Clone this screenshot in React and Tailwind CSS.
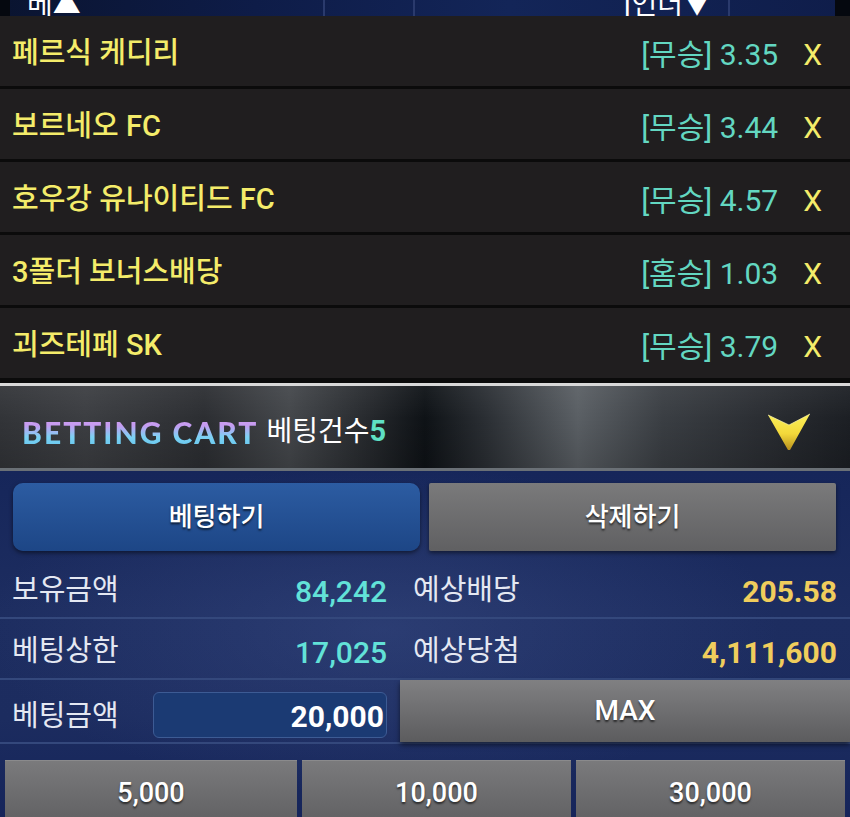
import React from "react";

const rows = [
  { name: "페르식 케디리", pick: "[무승]", odd: "3.35" },
  { name: "보르네오 FC", pick: "[무승]", odd: "3.44" },
  { name: "호우강 유나이티드 FC", pick: "[무승]", odd: "4.57" },
  { name: "3폴더 보너스배당", pick: "[홈승]", odd: "1.03" },
  { name: "괴즈테페 SK", pick: "[무승]", odd: "3.79" },
];

function Arrow() {
  return (
    <svg width="46" height="40" viewBox="0 0 46 40">
      <defs>
        <linearGradient id="ag" x1="0" y1="0" x2="0" y2="1">
          <stop offset="0" stopColor="#fbf05a" />
          <stop offset="0.55" stopColor="#f3d83a" />
          <stop offset="1" stopColor="#b8901e" />
        </linearGradient>
      </defs>
      <path d="M2 3 L23 13 L44 2 L24 38 L22 38 Z" fill="url(#ag)" />
      <path d="M2 3 L23 13 L44 2" fill="none" stroke="#fff8b0" strokeWidth="1" opacity="0.7" />
    </svg>
  );
}

export default function App() {
  return (
    <div className="w-[850px] h-[817px] overflow-hidden bg-[#1b2b5e] font-['Roboto','Noto_Sans_CJK_KR',sans-serif]">
      {/* top clipped header strip */}
      <div className="flex h-[16px] overflow-hidden bg-[linear-gradient(90deg,#0a1430_0%,#0e1c48_30%,#132558_60%,#0f1d4a_100%)] text-white text-[28px] leading-[28px]">
        <div className="w-[10px] bg-[#05080f]" />
        <div className="w-[315px] border-r-[2px] border-[#2a3a6c] pl-[17px]">
          <div className="mt-[-9px]">베▲</div>
        </div>
        <div className="w-[90px] border-r-[2px] border-[#2a3a6c]" />
        <div className="w-[315px] border-r-[2px] border-[#2a3a6c] pl-[209px]">
          <div className="mt-[-9px]">[언더▼</div>
        </div>
        <div className="w-[105px]" />
        <div className="flex-1 bg-[#05080f]" />
      </div>

      {/* picks list */}
      {rows.map((r, i) => (
        <div
          key={i}
          className="flex h-[73px] items-center border-b-[3px] border-[#0b0b0b] bg-[#201e1f] pl-[12px] pr-[28px] pt-[6px]"
        >
          <span className="text-[29px] font-medium text-[#f4ec6a]">{r.name}</span>
          <span className="ml-auto text-[30px] text-[#63d7c1]">
            {r.pick} {r.odd}
          </span>
          <span className="ml-[25px] text-[30px] text-[#f4ec6a]">X</span>
        </div>
      ))}

      {/* lines */}
      <div className="h-[2px] bg-[#0b0b0b]" />
      <div className="h-[3px] bg-[#d8d8d8]" />

      {/* betting cart header */}
      <div className="flex h-[85px] items-center border-b-[3px] border-[#6a7076] bg-[linear-gradient(180deg,rgba(255,255,255,0.05)_0%,rgba(0,0,0,0)_40%,rgba(0,0,0,0.15)_100%),linear-gradient(90deg,#323438_0%,#3c3e42_10%,#2c2e32_24%,#44474b_34%,#24272b_44%,#0e1216_50%,#2a2e33_57%,#5a5f64_68%,#3a3e43_78%,#2a2d32_90%,#1c1f24_100%)] pl-[22px] pr-[38px] pt-[10px]">
        <span className="bg-[linear-gradient(180deg,#e09cf2_0%,#c49cf0_35%,#7cd2f4_60%,#56bce8_100%)] bg-clip-text text-transparent font-['Lato','Liberation_Sans',sans-serif] font-black text-[30px] tracking-[2px]">
          BETTING CART
        </span>
        <span className="ml-[8px] text-white text-[28px]">베팅건수</span>
        <span className="text-[#5fe0c4] text-[29px] font-bold">5</span>
        <div className="ml-auto">
          <Arrow />
        </div>
      </div>

      {/* blue panel */}
      <div className="bg-[radial-gradient(ellipse_at_45%_45%,rgba(70,90,150,0.35),rgba(0,0,0,0)_60%),linear-gradient(180deg,#16265a_0%,#1d2d60_40%,#1c2c5f_70%,#15245a_100%)]">
        <div className="flex gap-[9px] pl-[13px] pr-[14px] pt-[12px]">
          <div className="flex h-[68px] w-[407px] items-center justify-center rounded-[10px] bg-[linear-gradient(180deg,#2c5ca2_0%,#1d4686_100%)] shadow-[0_2px_4px_rgba(0,0,0,0.5)] text-white text-[26px] font-medium [text-shadow:0_2px_2px_rgba(0,0,0,0.6)]">
            베팅하기
          </div>
          <div className="flex h-[68px] w-[407px] items-center justify-center rounded-[2px] bg-[linear-gradient(180deg,#7a7a7b_0%,#606062_100%)] shadow-[0_2px_4px_rgba(0,0,0,0.5)] text-white text-[26px] font-medium [text-shadow:0_2px_2px_rgba(0,0,0,0.6)]">
            삭제하기
          </div>
        </div>

        {/* row 1 */}
        <div className="flex h-[68px] items-center border-b-[2px] border-[#34487c] pt-[14px] text-[29px]">
          <div className="flex w-[400px] items-center pl-[12px] pr-[13px]">
            <span className="text-[#e4e8f2]">보유금액</span>
            <span className="ml-auto text-[30px] font-medium text-[#62e2d8]">84,242</span>
          </div>
          <div className="flex flex-1 items-center pl-[13px] pr-[13px]">
            <span className="text-[#e4e8f2]">예상배당</span>
            <span className="ml-auto text-[30px] font-bold text-[#f0cd5c]">205.58</span>
          </div>
        </div>

        {/* row 2 */}
        <div className="flex h-[61px] items-center border-b-[2px] border-[#34487c] pt-[7px] text-[29px]">
          <div className="flex w-[400px] items-center pl-[12px] pr-[13px]">
            <span className="text-[#e4e8f2]">베팅상한</span>
            <span className="ml-auto text-[30px] font-medium text-[#62e2d8]">17,025</span>
          </div>
          <div className="flex flex-1 items-center pl-[13px] pr-[13px]">
            <span className="text-[#e4e8f2]">예상당첨</span>
            <span className="ml-auto text-[30px] font-bold text-[#f0cd5c]">4,111,600</span>
          </div>
        </div>

        {/* row 3 */}
        <div className="flex h-[64px] items-stretch border-b-[2px] border-[#34487c] text-[29px]">
          <div className="flex w-[400px] items-center pl-[12px] pr-[13px] pt-[8px]">
            <span className="pt-[3px] text-[#e4e8f2]">베팅금액</span>
            <div className="ml-auto flex h-[46px] w-[234px] items-center justify-end rounded-[6px] border border-[#3d5b94] bg-[#1b3a73] pr-[2px] pt-[2px]">
              <span className="text-[30px] font-bold text-white">20,000</span>
            </div>
          </div>
          <div className="flex flex-1 items-center justify-center bg-[linear-gradient(180deg,#808082_0%,#5c5c5e_100%)] shadow-[0_3px_5px_rgba(0,0,0,0.55)] text-white text-[28px] font-medium [text-shadow:0_2px_2px_rgba(0,0,0,0.6)]">
            MAX
          </div>
        </div>

        {/* quick amount buttons */}
        <div className="grid grid-cols-[292px_1fr_1fr] gap-[5px] px-[5px] pt-[16px]">
          {["5,000", "10,000", "30,000"].map((t) => (
            <div
              key={t}
              className="flex h-[64px] items-center justify-center border-t border-[#8a8a8c] bg-[linear-gradient(180deg,#7a7a7c_0%,#606062_100%)] pt-[2px] text-white text-[27px] font-medium [text-shadow:0_2px_2px_rgba(0,0,0,0.6)]"
            >
              {t}
            </div>
          ))}
        </div>
      </div>
    </div>
  );
}
